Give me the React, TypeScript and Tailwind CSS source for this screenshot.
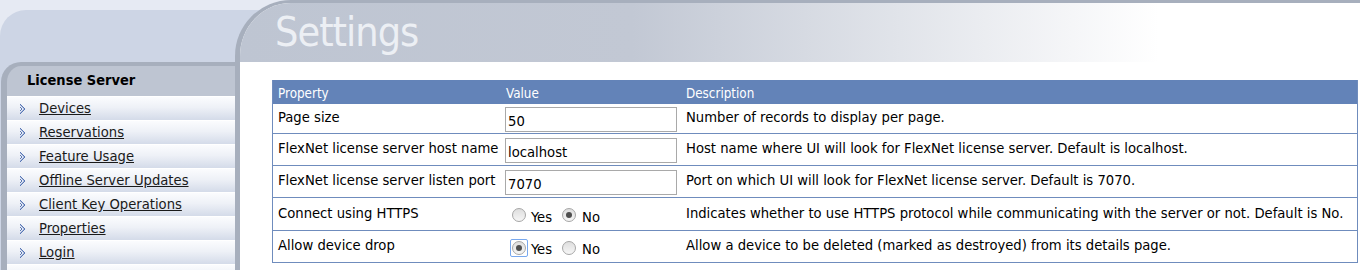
import React from "react";

const FONT = { fontFamily: '"DejaVu Sans Condensed", "Liberation Sans", Arial, sans-serif' };

function Arrow() {
  const dark = "#5876b4";
  const light = "#a9badd";
  const px: [number, number, string][] = [
    [0, 0, dark],
    [0, 1, light], [1, 1, dark],
    [1, 2, light], [2, 2, dark],
    [0, 3, dark], [2, 3, light], [3, 3, dark],
    [1, 4, dark], [3, 4, light], [4, 4, dark],
    [1, 5, dark], [3, 5, light], [4, 5, dark],
    [0, 6, dark], [2, 6, light], [3, 6, dark],
    [1, 7, light], [2, 7, dark],
    [0, 8, light], [1, 8, dark],
    [0, 9, dark],
  ];
  return (
    <svg width="5" height="10" viewBox="0 0 5 10" className="flex-none" shapeRendering="crispEdges">
      {px.map(([x, y, c], i) => (
        <rect key={i} x={x} y={y} width="1" height="1" fill={c} />
      ))}
    </svg>
  );
}

function Radio({ checked, focus }: { checked?: boolean; focus?: boolean }) {
  return (
    <span className="relative flex-none w-[14px] h-[14px]">
      {focus && (
        <span className="absolute -inset-[2px] border-[1.5px] border-[#78a8ee] rounded-[2px]" />
      )}
      <span className="absolute inset-0 rounded-full border border-[#a6a6a6] bg-[linear-gradient(#dedede,#f6f6f6)] flex items-center justify-center">
        {checked && <span className="w-[6px] h-[6px] rounded-full bg-[#4f4f4f]" />}
      </span>
    </span>
  );
}

function RadioPair({ yes }: { yes: boolean }) {
  return (
    <div className="flex items-center pl-[7px]">
      <Radio checked={yes} focus={yes} />
      <span className="ml-[5px] mt-[3px]">Yes</span>
      <span className="ml-[10px] flex items-center">
        <Radio checked={!yes} />
      </span>
      <span className="ml-[6px] mt-[3px]">No</span>
    </div>
  );
}

function TextInput({ value }: { value: string }) {
  return (
    <div className="w-[172px] h-[25px] border border-[#a9a9a9] bg-white flex items-center pl-[2px] pt-[2px] text-black">
      {value}
    </div>
  );
}

const rows: { prop: string; value: React.ReactNode; desc: string; h: string }[] = [
  { prop: "Page size", value: <TextInput value="50" />, desc: "Number of records to display per page.", h: "h-[30px]" },
  { prop: "FlexNet license server host name", value: <TextInput value="localhost" />, desc: "Host name where UI will look for FlexNet license server. Default is localhost.", h: "h-[32px]" },
  { prop: "FlexNet license server listen port", value: <TextInput value="7070" />, desc: "Port on which UI will look for FlexNet license server. Default is 7070.", h: "h-[32px]" },
  { prop: "Connect using HTTPS", value: <RadioPair yes={false} />, desc: "Indicates whether to use HTTPS protocol while communicating with the server or not. Default is No.", h: "h-[33px]" },
  { prop: "Allow device drop", value: <RadioPair yes={true} />, desc: "Allow a device to be deleted (marked as destroyed) from its details page.", h: "h-[32px]" },
];

const navItems = [
  "Devices",
  "Reservations",
  "Feature Usage",
  "Offline Server Updates",
  "Client Key Operations",
  "Properties",
  "Login",
];

export default function App() {
  return (
    <div className="w-[1360px] h-[270px] overflow-hidden bg-[#e6eaf3] pt-[10px] text-black" style={FONT}>
      <div className="h-full bg-[#cdd5e5] rounded-tl-[26px] flex">
        <aside className="w-[235px] flex-none pt-[52px] pl-[1px]">
          <div className="h-full border-l-[6px] border-t-[4px] border-[#a7afbd] rounded-tl-[20px] bg-[#bec5d2] flex flex-col overflow-hidden">
            <div className="h-[30px] flex-none flex items-center pl-[20px] font-bold text-[14.5px]">
              License Server
            </div>
            {navItems.map((t) => (
              <div
                key={t}
                className="h-[24px] flex-none border-t border-white bg-[linear-gradient(#fbfcfe,#eef1f7_45%,#d4dbe9)] flex items-center pl-[13px] text-[14.67px]"
              >
                <Arrow />
                <a href="#" className="ml-[14px] underline underline-offset-[1px] text-[#1a1a1a] leading-none">
                  {t}
                </a>
              </div>
            ))}
            <div className="h-[24px] flex-none border-t border-white bg-[linear-gradient(#fbfcfe,#eef1f7_45%,#d4dbe9)]" />
          </div>
        </aside>
        <main className="flex-1 -mt-[10px] border-l-[5px] border-t-[3px] border-[#a7afbd] rounded-tl-[56px] bg-white flex flex-col overflow-hidden">
          <div className="h-[59px] flex-none bg-[linear-gradient(to_right,#bec5d2_0%,#c2c8d4_35%,#ffffff_82%)] pl-[35px] pt-[5px]">
            <h1 className="text-[41px] leading-[48px] text-[#eceff4] tracking-[-1px]">Settings</h1>
          </div>
          <div className="pt-[18px] pl-[32px] pr-[2px]">
            <div className="border-l border-r border-[#6f8cbd] text-[14.67px]">
              <div className="h-[24px] bg-[#6383b8] text-white text-[13.33px] grid grid-cols-[228px_180px_1fr] items-center pt-[3px]">
                <div className="pl-[5px]">Property</div>
                <div className="pl-[5px]">Value</div>
                <div className="pl-[5px]">Description</div>
              </div>
              {rows.map((r) => (
                <div
                  key={r.prop}
                  className={`${r.h} border-b border-[#6f8cbd] grid grid-cols-[228px_180px_1fr] items-center`}
                >
                  <div className="pl-[5px] pb-[3px] whitespace-nowrap">{r.prop}</div>
                  <div className="pl-[4px] pt-[2px]">{r.value}</div>
                  <div className="pl-[5px] pb-[3px] whitespace-nowrap">{r.desc}</div>
                </div>
              ))}
            </div>
          </div>
        </main>
      </div>
    </div>
  );
}
